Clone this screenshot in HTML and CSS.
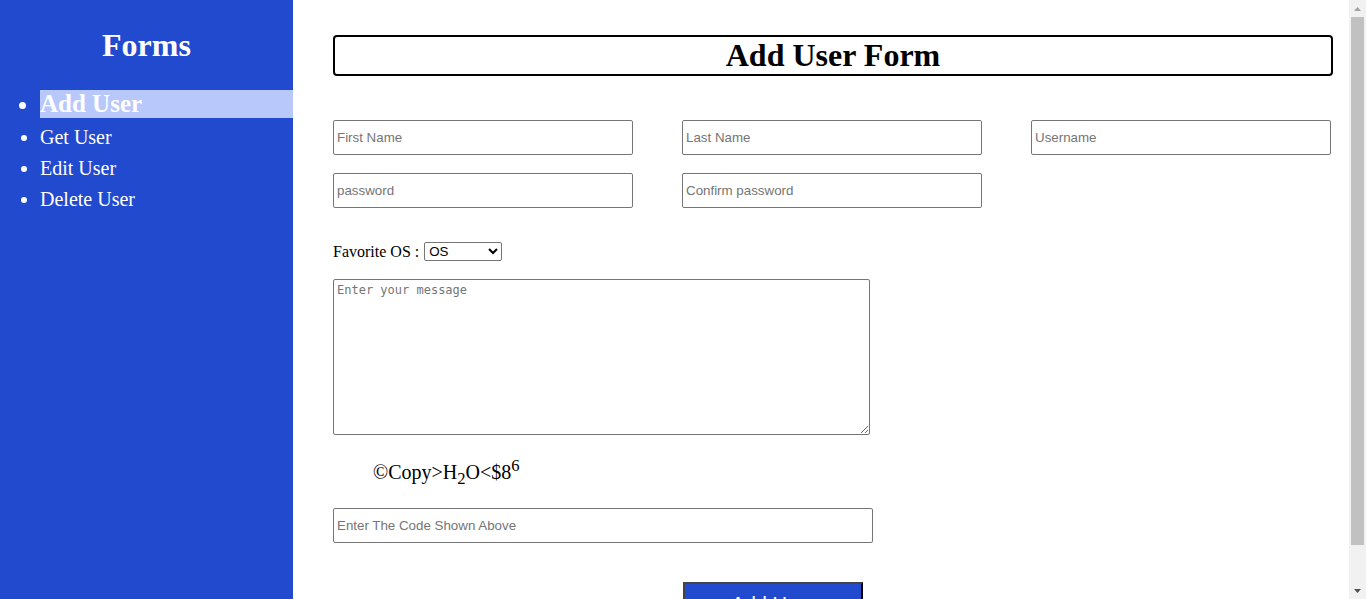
FILE: index.html
```html
<!DOCTYPE html>
<html lang="en">
<head>
<meta charset="utf-8">
<title>Add User Form</title>
<link rel="stylesheet" href="styles.css">
</head>
<body>
<div class="page">
<aside class="sidebar">
  <h1 class="side-title">Forms</h1>
  <ul class="side-menu">
    <li class="side-item active">Add User</li>
    <li class="side-item">Get User</li>
    <li class="side-item">Edit User</li>
    <li class="side-item">Delete User</li>
  </ul>
</aside>
<main class="content">
  <h1 class="form-title">Add User Form</h1>
  <form class="user-form">
    <div class="field-grid">
      <input class="text-input" type="text" placeholder="First Name">
      <input class="text-input" type="text" placeholder="Last Name">
      <input class="text-input" type="text" placeholder="Username">
      <input class="text-input" type="password" placeholder="password">
      <input class="text-input" type="password" placeholder="Confirm password">
    </div>
    <div class="os-row">
      <label class="os-label" for="os">Favorite OS :</label>
      <select class="os-select" id="os">
        <option>OS</option>
        <option>Windows</option>
        <option>Linux</option>
        <option>macOS</option>
      </select>
    </div>
    <textarea class="message" placeholder="Enter your message"></textarea>
    <p class="captcha">&copy;Copy&gt;H<sub>2</sub>O&lt;$8<sup>6</sup></p>
    <input class="text-input code-input" type="text" placeholder="Enter The Code Shown Above">
    <button class="submit" type="button">Add User</button>
  </form>
</main>
</div>
<div class="scrollbar" aria-hidden="true">
  <div class="sb-btn">
    <svg width="7" height="4" viewBox="0 0 7 4"><polygon points="3.5,0 7,4 0,4" fill="#a3a3a3"/></svg>
  </div>
  <div class="sb-track">
    <div class="sb-thumb"></div>
  </div>
  <div class="sb-btn">
    <svg width="7" height="4" viewBox="0 0 7 4"><polygon points="0,0 7,0 3.5,4" fill="#505050"/></svg>
  </div>
</div>
</body>
</html>
```
FILE: styles.css
```css
html, body {
  margin: 0;
  padding: 0;
  height: 100%;
  overflow: hidden;
}

body {
  display: flex;
  font-family: "Liberation Serif", "Times New Roman", serif;
  background: #ffffff;
  color: #000000;
}

.page {
  flex: 1;
  display: flex;
  align-items: stretch;
  height: 100vh;
  overflow-y: auto;
  scrollbar-width: none;
}

.page::-webkit-scrollbar {
  display: none;
}

.scrollbar {
  flex: 0 0 17px;
  width: 17px;
  height: 100vh;
  background: #f1f1f1;
  display: flex;
  flex-direction: column;
}

.sb-btn {
  height: 17px;
  flex: 0 0 17px;
  display: flex;
  align-items: center;
  justify-content: center;
}

.sb-track {
  flex: 1;
  padding: 0 2px 37px;
  display: flex;
  flex-direction: column;
}

.sb-thumb {
  flex: 1;
  background: #c1c1c1;
}

.sidebar {
  width: 293px;
  flex: 0 0 293px;
  background: #224acf;
  color: #ffffff;
  min-height: 736px;
}

.side-title {
  font-size: 32px;
  font-weight: bold;
  text-align: center;
  margin: 27px 0 26px;
  line-height: 37px;
}

.side-menu {
  margin: 0;
  padding-left: 40px;
  list-style: disc;
}

.side-item {
  font-size: 20px;
  line-height: 23px;
  margin-bottom: 8px;
}

.side-item.active {
  font-size: 25px;
  line-height: 28px;
  font-weight: bold;
  background: #b8c8fb;
  margin-bottom: 8px;
}

.content {
  flex: 1;
  padding: 35px 0 0 40px;
}

.form-title {
  width: 996px;
  margin: 0;
  border: 2px solid #000000;
  border-radius: 4px;
  font-size: 32px;
  line-height: 37px;
  text-align: center;
  font-weight: bold;
}

.user-form {
  display: flex;
  flex-direction: column;
  align-items: flex-start;
  padding-top: 44px;
}

.field-grid {
  display: grid;
  grid-template-columns: 300px 300px 300px;
  column-gap: 49px;
  row-gap: 18px;
}

.text-input {
  box-sizing: border-box;
  width: 300px;
  height: 35px;
  border: 1px solid #767676;
  border-radius: 2px;
  padding: 0 3px;
  font-family: "Liberation Sans", Arial, sans-serif;
  font-size: 13.333px;
  color: #000000;
  background: #ffffff;
  margin: 0;
}

.text-input::placeholder,
.message::placeholder {
  color: #757575;
}

.os-row {
  display: flex;
  align-items: center;
  margin-top: 34px;
  font-size: 16px;
}

.os-label {
  margin-right: 5px;
}

.os-select {
  box-sizing: border-box;
  width: 78px;
  height: 19px;
  border: 1px solid #767676;
  border-radius: 2px;
  font-family: "Liberation Sans", Arial, sans-serif;
  font-size: 13.333px;
  padding: 0;
  background: #ffffff;
  color: #000000;
}

.message {
  box-sizing: border-box;
  width: 537px;
  height: 156px;
  margin-top: 18px;
  border: 1px solid #767676;
  border-radius: 2px;
  padding: 3px 3px;
  font-family: "DejaVu Sans Mono", monospace;
  font-size: 12px;
  resize: both;
}

.captcha {
  margin: 26px 0 0 40px;
  font-size: 20px;
  line-height: 23px;
}

.captcha sub,
.captcha sup {
  font-size: 0.83em;
  line-height: 0;
}

.code-input {
  width: 540px;
  margin-top: 24px;
}

.submit {
  margin: 39px 0 20px 350px;
  width: 180px;
  height: 44px;
  background: #224acf;
  color: #ffffff;
  border: 2px solid;
  border-color: #444444 #000000 #000000 #444444;
  font-family: "Liberation Sans", Arial, sans-serif;
  font-size: 20px;
  padding: 0;
  flex: 0 0 auto;
}
```
